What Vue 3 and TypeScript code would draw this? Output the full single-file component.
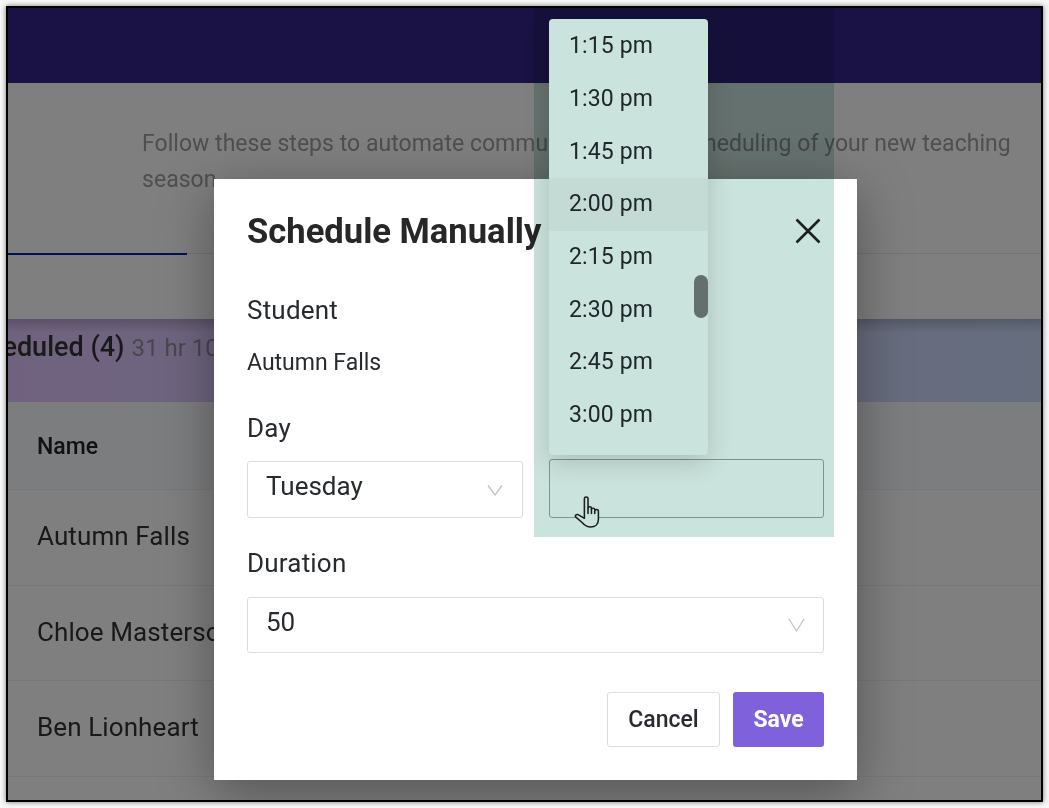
<script setup lang="ts">
const times: string[] = ['1:15 pm', '1:30 pm', '1:45 pm', '2:00 pm', '2:15 pm', '2:30 pm', '2:45 pm', '3:00 pm']
const rows: string[] = ['Autumn Falls', 'Chloe Masterson', 'Ben Lionheart']
</script>

<template>
  <div class="screen">
    <div class="frame">
      <header class="topbar"></header>
      <section class="intro">
        <p>Follow these steps to automate communication and scheduling of your new teaching season.</p>
      </section>
      <nav class="tabs"><span class="tab"></span></nav>
      <div class="band">
        <span class="band-title">Scheduled (4)</span>
        <span class="band-sub">31 hr 10 min</span>
      </div>
      <div class="thead">Name</div>
      <div v-for="r in rows" :key="r" class="trow">{{ r }}</div>

      <div class="overlay"></div>

      <div class="modal">
        <div class="modal-head">
          <h2>Schedule Manually</h2>
          <svg class="close" width="26" height="26" viewBox="0 0 26 26" fill="none" stroke="#222" stroke-width="2.6">
            <path d="M1.500 1.500 24.500 24.500M24.500 1.500 1.500 24.500" />
          </svg>
        </div>
        <div class="label student">Student</div>
        <div class="value">Autumn Falls</div>
        <div class="label day">Day</div>
        <div class="day-row">
          <div class="select day-select">
            <span>Tuesday</span>
            <svg width="16" height="12" viewBox="0 0 16 12" fill="none" stroke="#c4c4c4" stroke-width="1.3">
              <path d="M1 1.500 8 11 15 1.500" />
            </svg>
          </div>
          <div class="time-input"></div>
        </div>
        <div class="label duration">Duration</div>
        <div class="select duration-select">
          <span>50</span>
          <svg width="17" height="14" viewBox="0 0 17 14" fill="none" stroke="#c4c4c4" stroke-width="1.3">
            <path d="M1 1 8.500 13 16 1" />
          </svg>
        </div>
        <div class="actions">
          <button class="btn cancel">Cancel</button>
          <button class="btn save">Save</button>
        </div>
      </div>

      <div class="menu">
        <div v-for="t in times" :key="t" class="item" :class="{ hover: t === '2:00 pm' }">{{ t }}</div>
        <div class="thumb"></div>
      </div>

      <svg class="hand" width="27" height="33" viewBox="0 0 26 34" preserveAspectRatio="none" fill="#fff" stroke="#222" stroke-width="1.5" stroke-linejoin="round" stroke-linecap="round">
        <path d="M10 20V3.500C10 1.500 13.500 1.500 13.500 3.500V13.500C13.500 11.500 16.800 11.500 16.800 13.500V15C16.800 13 20 13 20 15V16.200C20 14.500 23.500 14.500 23.500 16.500V25C23.500 30 20.500 33 16 33C12 33 10 31 7.500 28L1.800 22.800C.5 21.500 2.300 19.300 4 20.300L10 24Z" />
        <path d="M13.500 13.500V19M16.800 15V19M20 16V19" />
      </svg>

      <div class="tint"></div>
    </div>
  </div>
</template>

<style>
html, body { margin: 0; background: #f4f4f4; }
</style>

<style scoped>
.screen {
  width: 1049px;
  height: 808px;
  padding: 6px;
  box-sizing: border-box;
  font-family: Roboto, "Liberation Sans", sans-serif;
  background: #f7f7f7;
  overflow: hidden;
}
.frame {
  position: relative;
  width: 1037px;
  height: 796px;
  box-sizing: border-box;
  border: 2px solid #000;
  background: #fff;
  overflow: hidden;
  box-shadow: 0 0 5px rgba(0, 0, 0, .55);
}
.topbar { height: 75px; background: #342488; }
.intro { height: 171px; box-sizing: border-box; padding: 43px 10px 0 134px; border-bottom: 1px solid #e6e6e6; }
.intro p { margin: 0; font-size: 23px; line-height: 36px; letter-spacing: .03px; color: #9e9e9e; }
.tabs { height: 65px; display: flow-root; }
.tab { display: block; width: 179px; height: 2px; margin-top: -1px; background: #0020c0; }
.band {
  height: 83px;
  box-sizing: border-box;
  margin-left: -51px;
  padding: 12px 0 0 0;
  background: linear-gradient(180deg, rgba(0,0,0,.18) 0, rgba(0,0,0,0) 14px), linear-gradient(90deg, #e2c4ff 0%, #ccdcfc 100%);
  white-space: nowrap;
}
.band-title { font-size: 27px; font-weight: 500; color: #333; margin-right: 7px; }
.band-sub { font-size: 24px; color: #8f8f96; }
.thead {
  height: 88px;
  box-sizing: border-box;
  padding: 31px 0 0 29px;
  font-size: 23px;
  font-weight: 500;
  color: #222;
  background: #f8fafc;
  border-bottom: 1px solid #f0f0f0;
}
.trow {
  height: 95.500px;
  box-sizing: border-box;
  padding: 31.400px 0 0 29px;
  font-size: 26px;
  letter-spacing: .1px;
  color: #333;
  border-bottom: 1px solid #eee;
}
.overlay { position: absolute; inset: 0; background: rgba(0, 0, 0, .5); }
.modal {
  position: absolute;
  left: 206px;
  top: 171px;
  width: 643px;
  height: 601px;
  box-sizing: border-box;
  padding: 32px 33px 0;
  background: #fff;
  box-shadow: 0 12px 50px rgba(0, 0, 0, .35);
  color: #272b30;
}
.modal-head { display: flex; justify-content: space-between; align-items: center; height: 40px; }
.modal-head h2 { margin: 0; font-size: 34.600px; font-weight: 700; line-height: 40px; color: #272727; }
.close { margin-right: 3px; }
.label { font-size: 26px; line-height: 30px; letter-spacing: .2px; }
.student { margin-top: 44px; }
.value { margin-top: 24px; font-size: 23px; line-height: 28px; }
.day { margin-top: 36px; }
.day-row { display: grid; grid-template-columns: 276px 275px; gap: 26px; margin-top: 16px; align-items: end; }
.select {
  display: flex;
  justify-content: space-between;
  align-items: center;
  box-sizing: border-box;
  border: 1px solid #ddd;
  border-radius: 3px;
  padding: 0 19px 0 18px;
  font-size: 26px;
  background: #fff;
}
.day-select { height: 57px; }
.day-select span { margin-top: -8px; }
.duration-select { height: 56px; padding-right: 18px; margin-top: 19px; }
.duration-select span { margin-top: -7px; }
.duration-select svg { margin-top: -1px; }
.time-input { height: 59px; box-sizing: border-box; border: 1px solid #a4a4a4; border-radius: 3px; background: #fff; }
.duration { margin-top: 30px; }
.actions { display: flex; justify-content: flex-end; gap: 13px; margin-top: 39px; }
.btn { height: 55px; box-sizing: border-box; border-radius: 3px; font-family: inherit; font-size: 23px; font-weight: 500; padding: 0; }
.cancel { width: 113px; background: #fff; border: 1px solid #ddd; color: #272b30; }
.save { width: 91px; background: #8061dc; border: 0; color: #fff; font-weight: 700; }
.menu {
  position: absolute;
  left: 541px;
  top: 11px;
  width: 159px;
  height: 436px;
  box-sizing: border-box;
  padding-top: 1.200px;
  border-radius: 4px;
  background: #fff;
  box-shadow: 0 8px 26px rgba(0, 0, 0, .16);
  overflow: hidden;
}
.item {
  height: 52.700px;
  line-height: 52.700px;
  padding-left: 20px;
  font-size: 23px;
  letter-spacing: .14px;
  color: #272b30;
}
.item.hover { background: #f6f6f6; }
.thumb {
  position: absolute;
  right: 0;
  top: 256px;
  width: 14px;
  height: 43px;
  border-radius: 7px;
  background: #7e7e7e;
}
.tint {
  position: absolute;
  left: 526px;
  top: 0;
  width: 300px;
  height: 529px;
  background: #cbe3dd;
  mix-blend-mode: multiply;
  pointer-events: none;
}
.hand { position: absolute; left: 566px; top: 487px; }
</style>
